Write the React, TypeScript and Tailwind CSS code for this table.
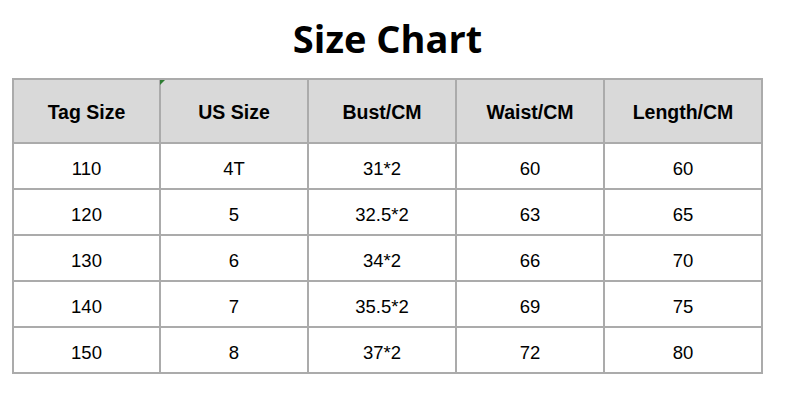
import React from "react";

const headers = ["Tag Size", "US Size", "Bust/CM", "Waist/CM", "Length/CM"];
const rows = [
  ["110", "4T", "31*2", "60", "60"],
  ["120", "5", "32.5*2", "63", "65"],
  ["130", "6", "34*2", "66", "70"],
  ["140", "7", "35.5*2", "69", "75"],
  ["150", "8", "37*2", "72", "80"],
];

export default function App() {
  return (
    <div className="w-[800px] h-[400px] bg-white overflow-hidden">
      <div className="ml-[12px] w-[751px] flex flex-col">
        <div
          className="h-[78px] flex items-start justify-center pt-[14px] text-[38px] leading-[48px] font-bold text-black"
          style={{ fontFamily: '"Open Sans", "Noto Sans", sans-serif' }}
        >
          Size Chart
        </div>
        <div
          className="grid grid-cols-[147px_148px_148px_148px_158px] border-l-2 border-t-2 border-[#ababab] text-black"
          style={{ fontFamily: '"Liberation Sans", Arial, sans-serif' }}
        >
          {headers.map((h, i) => (
            <div
              key={h}
              className="relative h-[64px] bg-[#d9d9d9] border-r-2 border-b-2 border-[#ababab] flex items-center justify-center pt-[4px] text-[19.5px] font-bold"
            >
              {i === 1 && (
                <svg className="absolute -left-[1px] top-0" width="6" height="6" viewBox="0 0 6 6">
                  <polygon points="0,0 5,0 0,5" fill="#2e7d32" />
                </svg>
              )}
              {h}
            </div>
          ))}
          {rows.map((r, ri) =>
            r.map((c, ci) => (
              <div
                key={`${ri}-${ci}`}
                className="h-[46px] bg-white border-r-2 border-b-2 border-[#ababab] flex items-center justify-center pt-[5px] text-[18.5px]"
              >
                {c}
              </div>
            ))
          )}
        </div>
      </div>
    </div>
  );
}
